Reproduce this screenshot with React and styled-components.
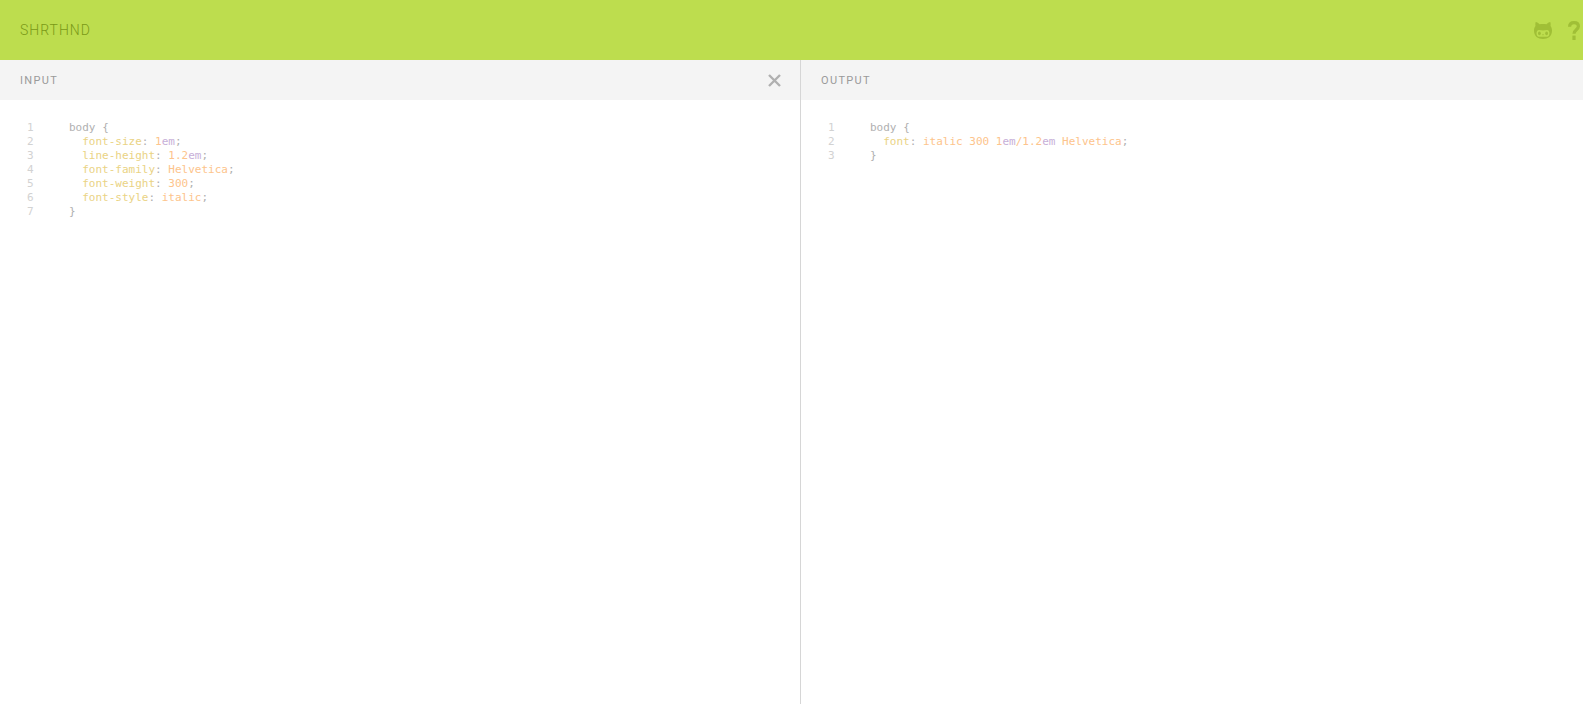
import styled, { createGlobalStyle } from 'styled-components'

const GlobalStyle = createGlobalStyle`
  html, body {
    margin: 0;
    padding: 0;
    height: 100%;
    background: #fff;
    overflow: hidden;
  }
`;

const Page = styled.div`
  height: 704px;
  display: flex;
  flex-direction: column;
  font-family: Roboto, "Liberation Sans", sans-serif;
`;

const Header = styled.header`
  height: 60px;
  flex: none;
  background: #bddd4e;
  padding: 0 0 0 20px;
  display: flex;
  align-items: center;
  justify-content: space-between;
`;

const Logo = styled.h1`
  margin: 0;
  font-size: 14px;
  line-height: 20px;
  font-weight: 300;
  letter-spacing: 1px;
  color: #7a9918;
`;

const HeaderIcons = styled.nav`
  display: flex;
  align-items: center;
  gap: 16px;
  padding-right: 3px;
  color: #a0bf36;
`;

const Panes = styled.main`
  flex: 1;
  display: grid;
  grid-template-columns: 801px 1fr;
  min-height: 0;
`;

const Pane = styled.section`
  display: flex;
  flex-direction: column;
  border-right: ${p => (p.$divided ? '1px solid #d6d6d6' : 'none')};
`;

const PaneBar = styled.div`
  height: 40px;
  flex: none;
  background: #f4f4f4;
  padding: 0 19px 0 20px;
  display: flex;
  align-items: center;
  justify-content: space-between;
`;

const PaneTitle = styled.h2`
  margin: 1px 0 0;
  font-size: 11px;
  line-height: 16px;
  font-weight: 400;
  letter-spacing: 1.35px;
  color: #9a9a9a;
`;

const CloseIcon = styled.svg`
  display: block;
  width: 13px;
  height: 13px;
  stroke: #b0b0b0;
  stroke-width: 2.4;
`;

const Code = styled.div`
  padding: 21px 0 0 27px;
  font-family: "DejaVu Sans Mono", monospace;
  font-size: 11px;
  line-height: 14px;
  color: #b0b0b0;
`;

const Line = styled.div`
  display: flex;
  height: 14px;
  white-space: pre;
`;

const LineNo = styled.span`
  width: 42px;
  flex: none;
  color: #d2d2d2;
`;

const Prop = styled.span`
  color: #ead384;
`;

const Val = styled.span`
  color: #fdc48c;
`;

const Unit = styled.span`
  color: #c7afd8;
`;

const inputLines = [
  <>body {'{'}</>,
  <>  <Prop>font-size</Prop>: <Val>1</Val><Unit>em</Unit>;</>,
  <>  <Prop>line-height</Prop>: <Val>1.2</Val><Unit>em</Unit>;</>,
  <>  <Prop>font-family</Prop>: <Val>Helvetica</Val>;</>,
  <>  <Prop>font-weight</Prop>: <Val>300</Val>;</>,
  <>  <Prop>font-style</Prop>: <Val>italic</Val>;</>,
  <>{'}'}</>,
];

const outputLines = [
  <>body {'{'}</>,
  <>  <Prop>font</Prop>: <Val>italic 300 1</Val><Unit>em</Unit><Val>/1.2</Val><Unit>em</Unit> <Val>Helvetica</Val>;</>,
  <>{'}'}</>,
];

function CodeBlock({ lines }) {
  return (
    <Code>
      {lines.map((line, i) => (
        <Line key={i}>
          <LineNo>{i + 1}</LineNo>
          <span>{line}</span>
        </Line>
      ))}
    </Code>
  )
}

function App() {
  return (
    <Page>
      <GlobalStyle />
      <Header>
        <Logo>SHRTHND</Logo>
        <HeaderIcons>
          <svg width="18" height="17" viewBox="0 0 17 16" fill="currentColor" fillRule="evenodd">
            <path d="M1.600 0C3 .2 4.300 1 5.200 2.100 6.200 1.900 7.300 1.800 8.500 1.800s2.300.1 3.300.3C12.700 1 14 .2 15.400 0c.4 1.200.5 2.500.2 3.800C16.500 4.900 17 6.300 17 8c0 5.600-3.600 8-8.500 8S0 13.600 0 8c0-1.700.5-3.100 1.400-4.200C1.100 2.500 1.200 1.200 1.600 0zM4.700 7.600C3.200 7.600 2.400 8.900 2.400 10.600S3.200 13.900 4.700 13.900h7.600c1.500 0 2.300-1.600 2.300-3.300s-.8-3-2.300-3c-1.300 0-2.500.3-3.800.3s-2.500-.3-3.800-.3z" />
            <ellipse cx="5.100" cy="10.700" rx="1.300" ry="1.800" />
            <ellipse cx="11.900" cy="10.700" rx="1.300" ry="1.800" />
            <circle cx="8.500" cy="12" r=".6" />
          </svg>
          <svg width="12" height="19" viewBox="0 0 12 19" fill="none" stroke="currentColor" strokeWidth="3.200">
            <path d="M1.600 5.800C1.600 3 3.400 1.600 6 1.600S10.400 3 10.400 5.300c0 3.400-4.400 3.400-4.400 7.400" />
            <path d="M6 14.600V19" />
          </svg>
        </HeaderIcons>
      </Header>
      <Panes>
        <Pane $divided>
          <PaneBar>
            <PaneTitle>INPUT</PaneTitle>
            <CloseIcon viewBox="0 0 13 13"><path d="M1 1l11 11M12 1L1 12" /></CloseIcon>
          </PaneBar>
          <CodeBlock lines={inputLines} />
        </Pane>
        <Pane>
          <PaneBar>
            <PaneTitle>OUTPUT</PaneTitle>
          </PaneBar>
          <CodeBlock lines={outputLines} />
        </Pane>
      </Panes>
    </Page>
  )
}

export default App
